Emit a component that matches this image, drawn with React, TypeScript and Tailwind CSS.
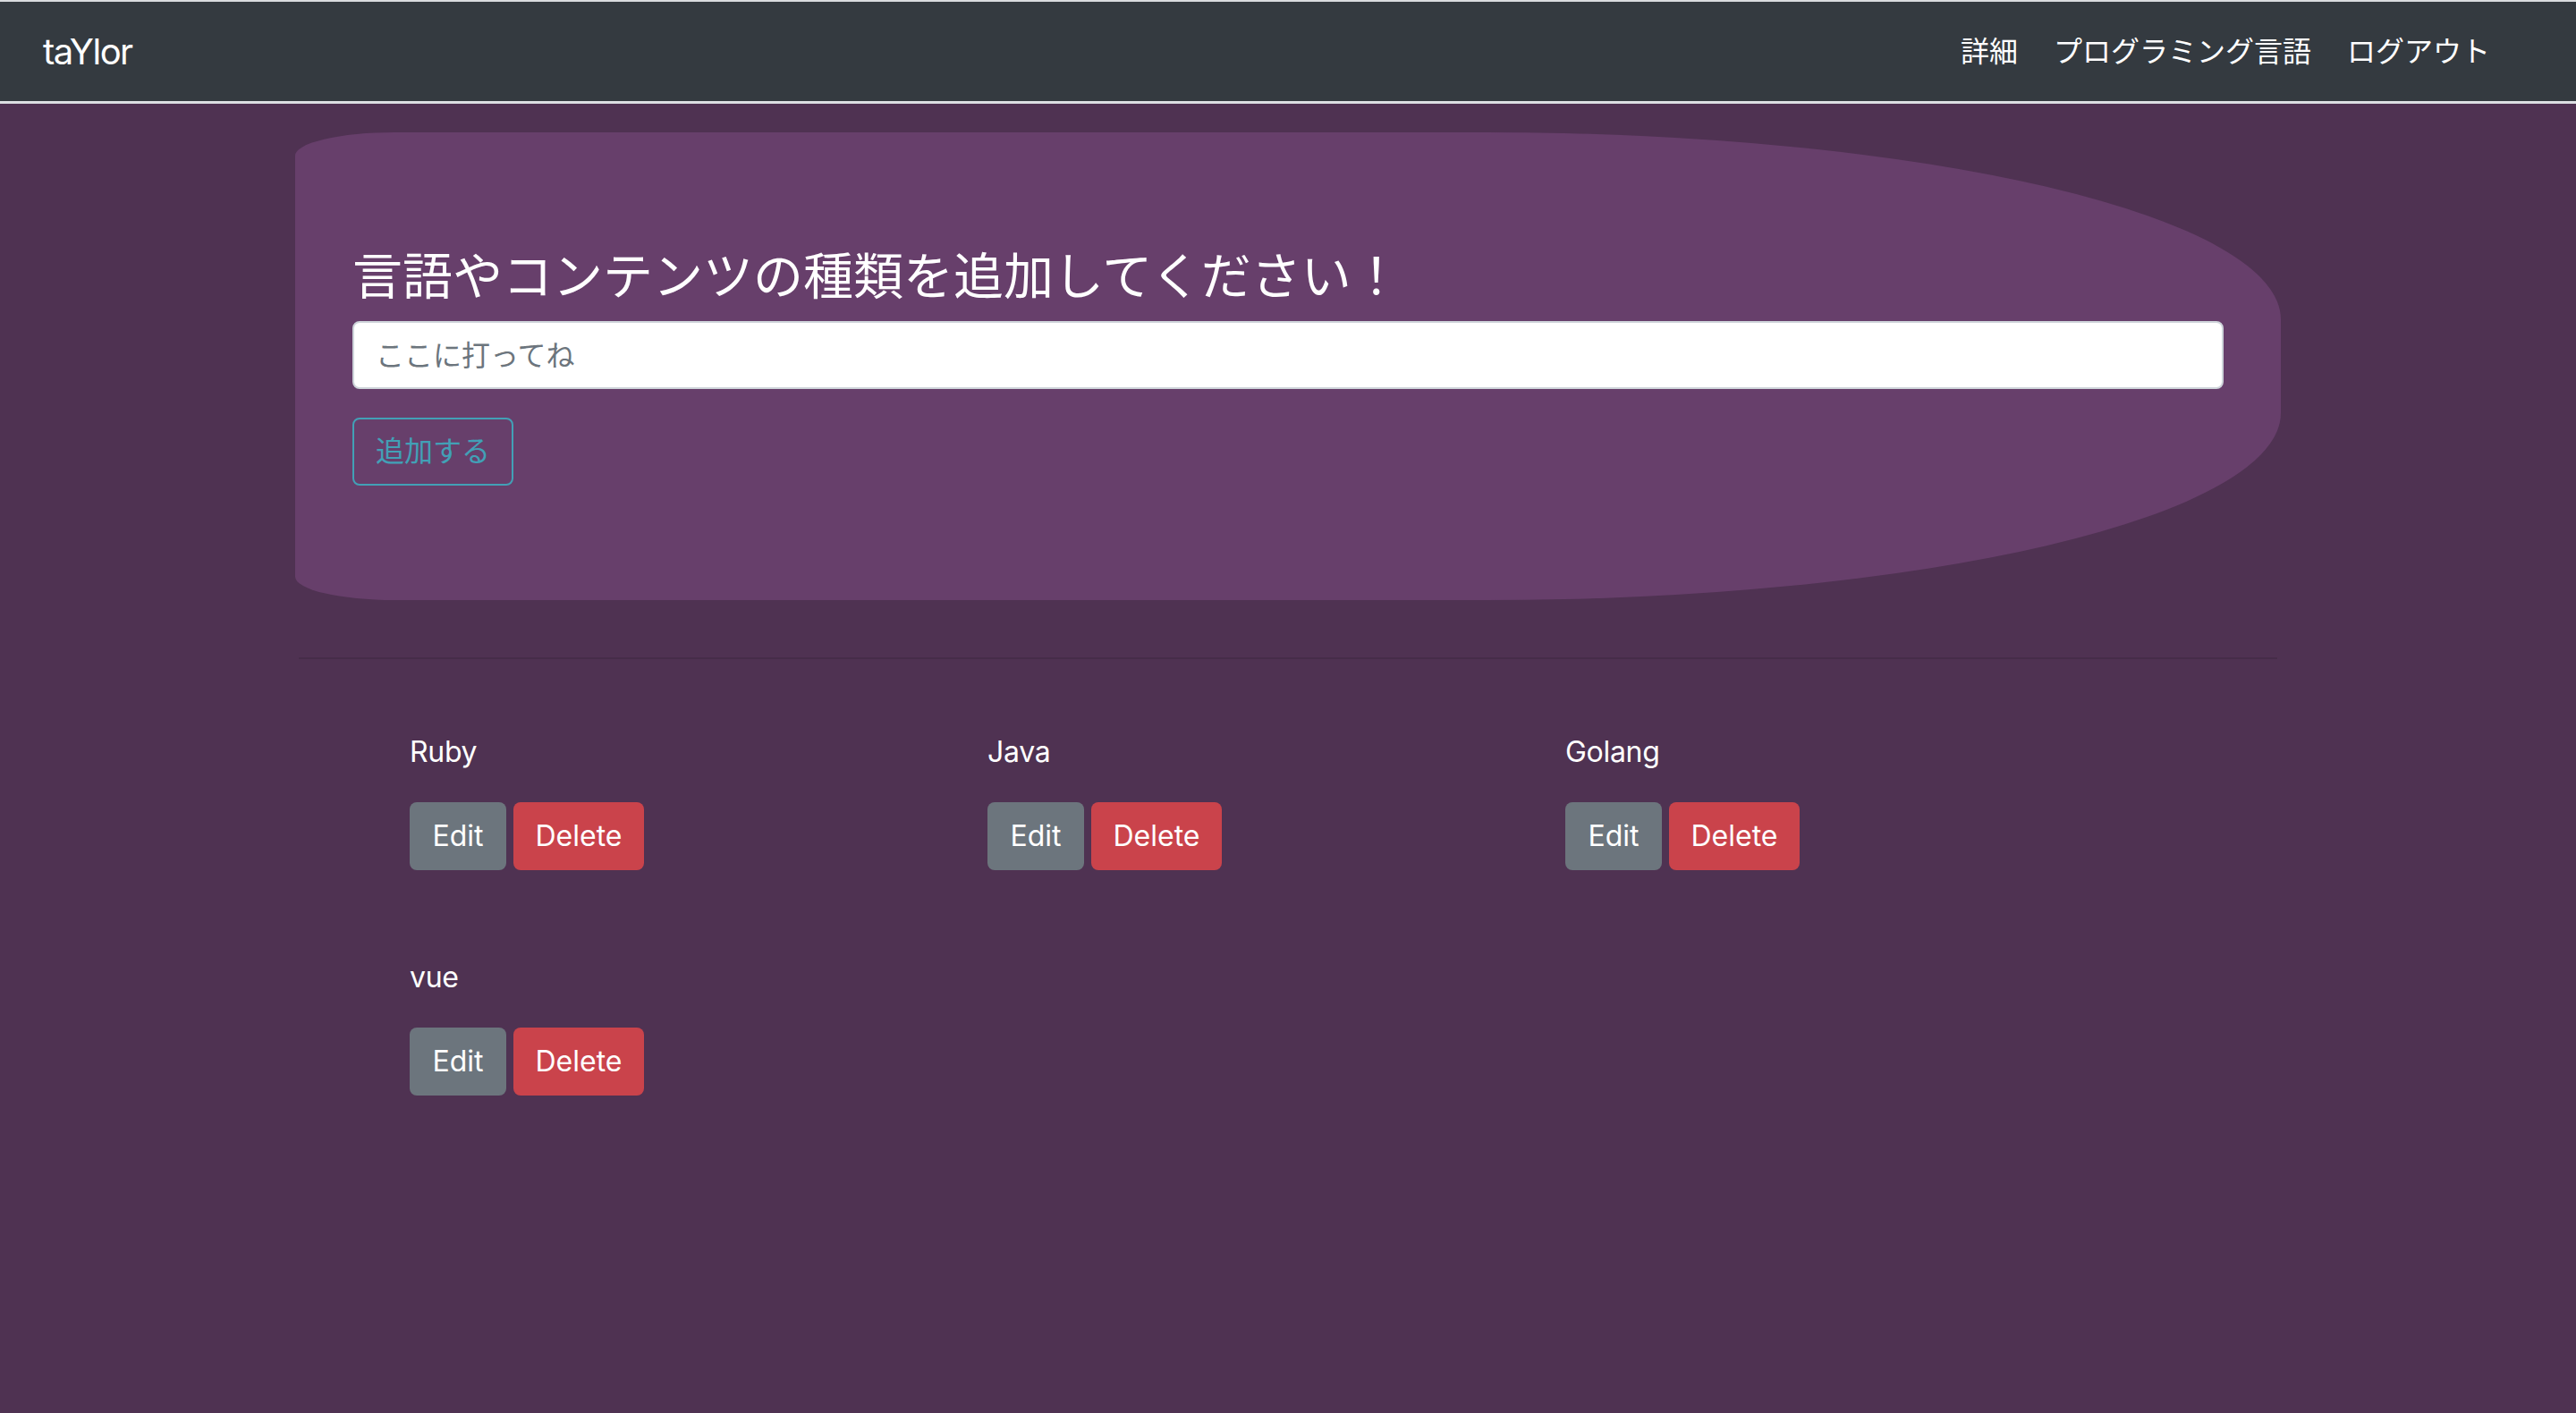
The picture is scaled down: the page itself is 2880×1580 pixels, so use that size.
import React from "react";

const font = "font-['Inter','Noto_Sans_CJK_JP',sans-serif]";

const items = ["Ruby", "Java", "Golang", "vue"];

export default function App() {
  return (
    <div className={`min-h-screen bg-[#4f3252] ${font} text-white`}>
      <nav className="flex h-[116px] items-center justify-between border-t-[2px] border-b-[3px] border-t-[#d9dbde] border-b-[#dcdfe3] bg-[#343a40] pl-[48px] pr-[76px]">
        <a className="text-[40px] leading-[60px] tracking-[-1.5px] text-white">taYlor</a>
        <ul className="flex items-center">
          <li className="px-[20px] text-[32px] leading-[48px]">詳細</li>
          <li className="px-[20px] text-[32px] leading-[48px]">プログラミング言語</li>
          <li className="px-[20px] text-[32px] leading-[48px]">ログアウト</li>
        </ul>
      </nav>

      <div className="mx-auto w-[2220px]">
        <div className="mt-[32px] mb-[64px] rounded-[5%_40%_40%_5%] bg-[#673f6b] px-[64px] py-[128px]">
          <h3 className="mb-[16px] text-[56px] leading-[67px] font-normal">
            言語やコンテンツの種類を追加してください！
          </h3>
          <input
            className="mb-[32px] block h-[76px] w-full rounded-[8px] border-[2px] border-[#ced4da] bg-white px-[24px] text-[32px] text-[#495057] placeholder:text-[#6c757d] outline-none"
            placeholder="ここに打ってね"
          />
          <button className="h-[76px] rounded-[8px] border-[2px] border-[#42a0b6] px-[24px] text-[32px] leading-[48px] text-[#42a0b6]">
            追加する
          </button>
        </div>

        <hr className="mx-[4px] mb-[32px] border-t-[2px] border-[rgba(0,0,0,0.1)]" />

        <div className="grid grid-cols-[repeat(3,646px)] pl-[80px]">
          {items.map((name) => (
            <div key={name} className="p-[48px]">
              <p className="mb-[32px] text-[32px] leading-[48px] tracking-[-0.3px]">{name}</p>
              <div className="flex gap-[8px]">
                <button className="flex h-[76px] w-[108px] items-center justify-center rounded-[8px] bg-[#6c757d] text-[32px] leading-[48px] text-white">
                  Edit
                </button>
                <button className="flex h-[76px] w-[146px] items-center justify-center rounded-[8px] bg-[#ca434b] text-[32px] leading-[48px] text-white">
                  Delete
                </button>
              </div>
            </div>
          ))}
        </div>
      </div>
    </div>
  );
}
